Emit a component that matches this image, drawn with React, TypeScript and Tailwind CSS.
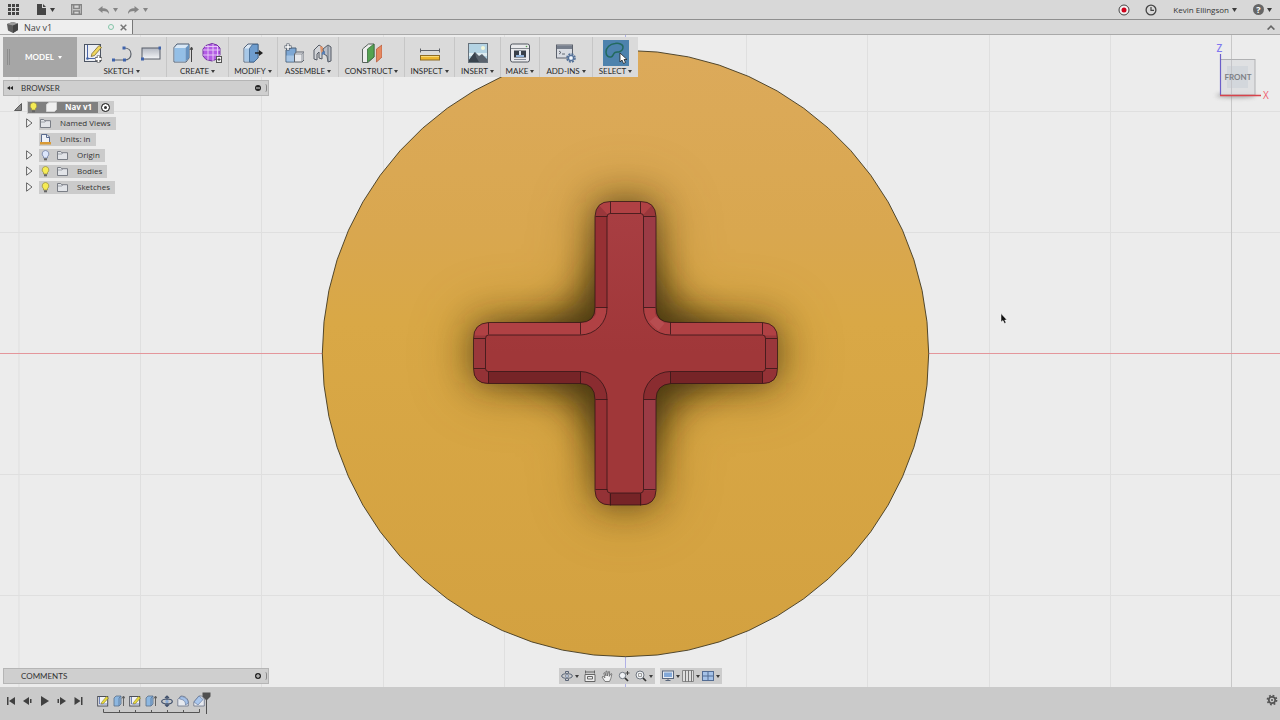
import React from 'react';

interface IconProps {
  children: React.ReactNode;
  size?: string;
  box?: string;
}

const Icon: React.FC<IconProps> = ({ children, size = 'w-5 h-5', box = '0 0 20 20' }) => (
  <svg viewBox={box} className={`${size} shrink-0`} fill="none" aria-hidden="true">
    {children}
  </svg>
);

const Caret: React.FC<{ className?: string }> = ({ className = 'text-[#3c3c3c]' }) => (
  <svg viewBox="0 0 5 4" className={`w-[5px] h-1 shrink-0 ${className}`} fill="currentColor" aria-hidden="true">
    <path d="M0 0h5L2.500 4z" />
  </svg>
);

const SmallCaret: React.FC<{ className?: string }> = ({ className = 'text-[#3c3c3c]' }) => (
  <svg viewBox="0 0 4 3" className={`w-1 h-[3px] shrink-0 ${className}`} fill="currentColor" aria-hidden="true">
    <path d="M0 0h4L2 3z" />
  </svg>
);

/* ---------- toolbar icons ---------- */

const SketchIcon = () => (
  <Icon>
    <rect x="1.5" y="1.5" width="16" height="17" fill="#eceef2" stroke="#4d5563" />
    <path d="M4.500 2v13.500h13" stroke="#4c66a8" />
    <circle cx="4.500" cy="15.500" r="1.300" fill="#4265a8" />
    <path d="M9 10.500l7-8 2.500 2-7 8-3.300 1z" fill="#f0d65c" stroke="#7a6a32" strokeWidth=".8" />
    <path d="M15.500 12.500v7M12 16h7" stroke="#555" strokeWidth="3.400" />
    <path d="M15.500 13v6M12.500 16h6" stroke="#fff" strokeWidth="1.800" />
  </Icon>
);

const LineIcon = () => (
  <Icon>
    <path d="M1 17h11.500c4 0 6.500-2.500 6.500-6s-2.500-6-7-6" stroke="#5d636d" strokeWidth="1.200" />
    <path d="M0 15.500h3v3H0zM11 15.500h3v3h-3zM10.500 3.500h3v3h-3z" fill="#3f63ab" />
  </Icon>
);

const RectIcon = () => (
  <Icon>
    <defs>
      <linearGradient id="rect" x2="0" y2="1">
        <stop stopColor="#b3b8c2" />
        <stop offset="1" stopColor="#f4f5f8" />
      </linearGradient>
    </defs>
    <rect x="1" y="5" width="18" height="11" fill="url(#rect)" stroke="#575d69" />
    <path d="M17.500 3.500h2.500v3h-2.500zM0 14.500h3v3H0z" fill="#3f63ab" />
  </Icon>
);

const ExtrudeIcon = () => (
  <Icon>
    <path d="M1 4.500L4 1h12v14l-3 4H1z" fill="#d9e8f6" stroke="#4d5d72" />
    <path d="M1.500 5h11v13.500h-11z" fill="#94bfe6" />
    <path d="M12.500 5L16 1.500V15l-3.500 3.500z" fill="#6792bf" />
    <path d="M18.500 19V5M17 7l1.500-3L20 7" stroke="#444" />
  </Icon>
);

const FormIcon = () => (
  <Icon>
    <path d="M4 2.500L10 .5l5 1.500 3 3v7l-3 4-5 2-6-1.500L1 13V6z" fill="#b35de4" stroke="#7234a0" />
    <path d="M1 7h17M1 12h17M6 2v15M11 1v17M15.500 3v13M3 3.500h13" stroke="#ead0f8" strokeWidth=".9" />
    <rect x="14.500" y="13.500" width="5" height="6" fill="#eee" stroke="#555" />
    <path d="M17 15v3M15.500 16.500h3" stroke="#444" />
  </Icon>
);

const PressPullIcon = () => (
  <Icon>
    <path d="M1 5l4-4h10v14l-4 4H1z" fill="#dbe8f5" stroke="#52637a" />
    <path d="M1.500 5.500H7v13H1.500z" fill="#a8c8e7" />
    <path d="M6.500 5.500l3-4H15V15l-4 4H6.500z" fill="#6f9dce" stroke="#3e638c" strokeWidth=".8" />
    <path d="M12 10h6" stroke="#222" strokeWidth="1.500" />
    <path d="M16 7l4 3-4 3z" fill="#222" />
  </Icon>
);

const ComponentIcon = () => (
  <Icon>
    <path d="M2 7l2-2h8v13l-2 1H2z" fill="#7da7d4" stroke="#4b6079" />
    <path d="M2.500 12.500h8v6h-8z" fill="#a7c5e4" />
    <path d="M10.500 11l2-2H20v8l-2 2h-7.500z" fill="#e8e9ec" stroke="#5b606a" />
    <path d="M10.500 11H18v8M18 11l2-2" stroke="#7c818a" strokeWidth=".8" />
    <path d="M4 .5v7M.5 4h7" stroke="#4c5663" strokeWidth="3" />
    <path d="M4 1v6M1 4h6" stroke="#fff" strokeWidth="1.500" />
  </Icon>
);

const JointIcon = () => (
  <Icon>
    <path d="M1 7l5-5 3 2v12l-3-1V9L4 11v6l-3-1z" fill="#d3d5d9" stroke="#555b65" />
    <path d="M7 3l3 1v4l-2 2z" fill="#e0956d" />
    <path d="M10 6l5-4 3 2v14l-3 1-1-6-3-2z" fill="#b9bec7" stroke="#555b65" />
    <path d="M15 2v16" stroke="#6c7682" />
    <path d="M9 9l3-1v3l-3 1z" fill="#587fb5" />
  </Icon>
);

const ConstructIcon = () => (
  <Icon>
    <path d="M.5 6l6-5H12v13l-6 5.500H.5z" fill="#eee" stroke="#59635c" />
    <path d="M5.500 6L12 1v13l-6.500 5z" fill="#55a350" stroke="#386e3c" strokeWidth=".8" />
    <path d="M14.500 6L20 2v12l-5.500 5z" fill="#e58860" stroke="#b85a3c" strokeWidth=".8" />
  </Icon>
);

const InspectIcon = () => (
  <Icon>
    <path d="M.5 5.500v4M19.500 5.500v4M1 7.500h18" stroke="#5c6068" />
    <rect x=".5" y="12.500" width="19" height="4.500" fill="#edb62e" stroke="#8d6b24" />
    <path d="M1 13.500h18" stroke="#f8d979" />
  </Icon>
);

const InsertIcon = () => (
  <Icon>
    <rect x=".5" y=".5" width="19" height="19" fill="#b4d3e3" stroke="#66717b" />
    <path d="M1 10h18v3H1z" fill="#e0edf2" />
    <circle cx="15" cy="5" r="2" fill="#f4f8d7" />
    <path d="M1 17l6-8 4 4 3-2 5 5v3H1z" fill="#59626d" />
    <path d="M1 17l6-8 1 5 3 5H1z" fill="#39434e" />
  </Icon>
);

const MakeIcon = () => (
  <Icon>
    <rect x=".5" y="1" width="19" height="18" rx="2" fill="#e9eaec" stroke="#50565f" />
    <path d="M1 5.500h18" stroke="#848990" />
    <rect x="4" y="7.500" width="12" height="7" fill="#384049" />
    <path d="M6 12h8v2H6z" fill="#92b3da" />
    <path d="M9 8h2v4H9z" fill="#dfe8f3" />
    <path d="M4 16.500h12" stroke="#8a8f97" />
    <circle cx="16.500" cy="3.500" r=".8" fill="#52a04d" />
  </Icon>
);

const AddInsIcon = () => (
  <Icon>
    <rect x=".5" y="2" width="16" height="13" fill="#d9dce2" stroke="#5b616c" />
    <path d="M1 2.500h15V6H1z" fill="#767e8c" />
    <path d="M3 8l2 1.500L3 11M6 11h3" stroke="#444b57" strokeWidth=".8" />
    <circle cx="15" cy="15" r="4" stroke="#557299" strokeWidth="1.600" strokeDasharray="2 1.140" />
    <circle cx="15" cy="15" r="2.600" fill="#d8e4f3" stroke="#557299" strokeWidth="1.200" />
    <circle cx="15" cy="15" r="1" fill="#fff" />
  </Icon>
);

const SelectIcon = () => (
  <span className="flex h-[26px] w-[26px] items-center justify-center bg-[#4d82ad]">
    <Icon size="w-[26px] h-[26px]" box="0 0 26 26">
      <path d="M16 12c3-1 4-2.500 4-5 0-3-4-4-8-3.500-5 .5-9 4-9 8.500 0 4 2.500 5.500 5 5s2-3.500 4-4.500 2.500-.2 4-.5z" stroke="#236a5e" strokeWidth="1.500" />
      <path d="M17 13v9l2-2 1.500 3.500 2-1L21 19.500h3z" fill="#fff" stroke="#222" strokeWidth=".8" />
    </Icon>
  </span>
);

interface ToolGroup {
  label: string;
  width: string;
  icons: React.FC[];
}

const toolGroups: ToolGroup[] = [
  { label: 'SKETCH', width: 'w-[89px]', icons: [SketchIcon, LineIcon, RectIcon] },
  { label: 'CREATE', width: 'w-[62px]', icons: [ExtrudeIcon, FormIcon] },
  { label: 'MODIFY', width: 'w-[49px]', icons: [PressPullIcon] },
  { label: 'ASSEMBLE', width: 'w-[61px]', icons: [ComponentIcon, JointIcon] },
  { label: 'CONSTRUCT', width: 'w-[66px]', icons: [ConstructIcon] },
  { label: 'INSPECT', width: 'w-[50px]', icons: [InspectIcon] },
  { label: 'INSERT', width: 'w-[46px]', icons: [InsertIcon] },
  { label: 'MAKE', width: 'w-[39px]', icons: [MakeIcon] },
  { label: 'ADD-INS', width: 'w-[53px]', icons: [AddInsIcon] },
  { label: 'SELECT', width: 'w-[46px]', icons: [SelectIcon] },
];

const Toolbar = () => (
  <div className="flex h-10 self-start bg-[#dadada] font-['Lato','Open_Sans',sans-serif]">
    <button className="flex w-[74px] items-center bg-[#a6a6a6] text-[8px] font-bold text-white">
      <span className="ml-1 h-4 w-[3px] border-x border-[#8c8c8c]" />
      <span className="flex flex-1 items-center justify-center gap-1">
        MODEL <SmallCaret className="text-white" />
      </span>
    </button>
    {toolGroups.map((group, i) => (
      <div
        key={group.label}
        className={`flex flex-col items-center ${group.width} ${i > 0 ? 'border-l border-[#c6c6c6]' : ''}`}
      >
        <div className="mt-[3px] flex h-[26px] items-center gap-[9px]">
          {group.icons.map((ToolIcon, n) => (
            <button key={n} aria-label={group.label}>
              <ToolIcon />
            </button>
          ))}
        </div>
        <button className="flex items-center gap-[2px] text-[8px] leading-[10px] whitespace-nowrap text-[#2a2a2a]">
          {group.label} <SmallCaret />
        </button>
      </div>
    ))}
  </div>
);

/* ---------- top bars ---------- */

const TopBar = () => (
  <header className="flex h-5 items-center border-b border-[#8f8f8f] bg-[#d8d8d8] pr-2 pl-2">
    <button aria-label="Data panel">
      <Icon size="w-[11px] h-[11px]" box="0 0 11 11">
        <path d="M0 0h3v3H0zM4 0h3v3H4zM8 0h3v3H8zM0 4h3v3H0zM4 4h3v3H4zM8 4h3v3H8zM0 8h3v3H0zM4 8h3v3H4zM8 8h3v3H8z" fill="#454545" />
      </Icon>
    </button>
    <button aria-label="File" className="ml-[18px] flex items-center gap-1">
      <Icon size="w-[9px] h-[11px]" box="0 0 9 11">
        <path d="M0 0h5v4h4v7H0z" fill="#454545" />
        <path d="M6 0l3 3H6z" fill="#454545" />
      </Icon>
      <Caret />
    </button>
    <button aria-label="Save" className="ml-4">
      <Icon size="w-[11px] h-[11px]" box="0 0 11 11">
        <path d="M.7.7h9.600v9.600H.7zM2.700.7v3.800h5.600V.7M2.700 10V7h5.600v3" stroke="#858585" strokeWidth="1.400" />
      </Icon>
    </button>
    <button aria-label="Undo" className="ml-4 flex items-center gap-1 text-[#858585]">
      <Icon size="w-[11px] h-2" box="0 0 11 8">
        <path d="M0 3.500L4.500 0v2.300C8.500 2.300 11 4 11 8 9.500 5.500 8 4.900 4.500 4.900V7z" fill="currentColor" />
      </Icon>
      <Caret className="text-[#858585]" />
    </button>
    <button aria-label="Redo" className="ml-[10px] flex items-center gap-1 text-[#858585]">
      <Icon size="w-[11px] h-2" box="0 0 11 8">
        <path d="M11 3.500L6.500 0v2.300C2.500 2.300 0 4 0 8c1.500-2.500 3-3.100 6.500-3.100V7z" fill="currentColor" />
      </Icon>
      <Caret className="text-[#858585]" />
    </button>

    <div className="ml-auto flex items-center">
      <button aria-label="Record">
        <Icon size="w-3 h-3" box="0 0 12 12">
          <circle cx="6" cy="6" r="5" fill="#f2f2f2" stroke="#444" />
          <circle cx="6" cy="6" r="2.500" fill="#d0021b" />
        </Icon>
      </button>
      <button aria-label="Job status" className="ml-[15px]">
        <Icon size="w-3 h-3" box="0 0 12 12">
          <circle cx="6" cy="6" r="4.900" stroke="#444" strokeWidth="1.300" />
          <path d="M6 3v3.300h3" stroke="#444" strokeWidth="1.200" />
        </Icon>
      </button>
      <button className="ml-4 flex items-center gap-[3px] text-[8px] text-[#333]">
        Kevin Ellingson <Caret />
      </button>
      <button aria-label="Help" className="ml-4 flex items-center gap-[3px]">
        <span className="flex h-[11px] w-[11px] items-center justify-center rounded-full bg-[#666] text-[9px] leading-none font-bold text-white">
          ?
        </span>
        <Caret />
      </button>
    </div>
  </header>
);

const TabBar = () => (
  <div className="flex h-[15px] justify-between border-b border-[#a9a9a9] bg-[#d8d8d8]">
    <div className="flex w-[133px] items-center border-r border-[#777] bg-[#eeeeee] pr-[5px] pl-[7px]">
      <Icon size="w-[11px] h-[11px]" box="0 0 11 11">
        <path d="M0 2L5.500 0 11 1.500V8L6 11 1 8.500z" fill="#5e5e5e" />
        <path d="M0 2L5.500 0 11 1.500 6 3.500z" fill="#9b9b9b" />
        <path d="M6 3.500l5-2V8l-5 3z" fill="#444" />
      </Icon>
      <span className="ml-[6px] text-[9px] leading-[13px] text-[#444]">Nav v1</span>
      <span className="ml-auto h-[6px] w-[6px] rounded-full border border-[#83c5a8]" />
      <button aria-label="Close tab" className="ml-[6px]">
        <Icon size="w-[7px] h-[7px]" box="0 0 7 7">
          <path d="M.7.7l5.600 5.600M6.300.7L.7 6.300" stroke="#777" strokeWidth="1.500" />
        </Icon>
      </button>
    </div>
    <button aria-label="Collapse" className="mr-[5px]">
      <Icon size="w-2 h-[5px]" box="0 0 8 5">
        <path d="M.6 4.600L4 1.200l3.400 3.400" stroke="#666" strokeWidth="1.600" />
      </Icon>
    </button>
  </div>
);

/* ---------- browser tree ---------- */

const Bulb: React.FC<{ on?: boolean }> = ({ on = true }) => (
  <Icon size="w-[9px] h-[11px]" box="0 0 9 11">
    <path d="M4.500.5a3.400 3.400 0 0 0-2 6.100V8h4V6.600a3.400 3.400 0 0 0-2-6.100z" fill={on ? '#f6ec55' : '#dce6fb'} stroke={on ? '#9b9344' : '#7180a3'} strokeWidth=".8" />
    <path d="M3 8.300h3v2H3z" fill="#656565" />
  </Icon>
);

const Folder = () => (
  <Icon size="w-[11px] h-[10px]" box="0 0 11 10">
    <path d="M.5 9.500v-8h3.200l1 1.200H10.500v6.800z" fill="#e2e4e8" stroke="#6f747d" strokeWidth=".9" />
    <path d="M1 4h4l.8-1" stroke="#8d929a" strokeWidth=".8" />
  </Icon>
);

const UnitsIcon = () => (
  <Icon size="w-[11px] h-[11px]" box="0 0 11 11">
    <path d="M1.500 8V.5H7L9.500 3v5" fill="#eef1f7" stroke="#5b6c8f" />
    <path d="M6.500.5V3.500h3" stroke="#5b6c8f" />
    <path d="M0 8h11v2.500H0z" fill="#d99a35" />
  </Icon>
);

const Expander = () => (
  <button aria-label="Expand" className="flex w-[13px] shrink-0">
    <Icon size="w-[7px] h-[10px]" box="0 0 7 10">
      <path d="M.6.800L6 5 .6 9.200z" fill="#f4f4f4" stroke="#555" strokeWidth=".9" />
    </Icon>
  </button>
);

interface TreeItem {
  label: string;
  icon: 'folder' | 'units';
  bulb?: 'on' | 'off';
}

const treeItems: TreeItem[] = [
  { label: 'Named Views', icon: 'folder' },
  { label: 'Units: in', icon: 'units' },
  { label: 'Origin', icon: 'folder', bulb: 'off' },
  { label: 'Bodies', icon: 'folder', bulb: 'on' },
  { label: 'Sketches', icon: 'folder', bulb: 'on' },
];

interface PanelBarProps {
  title: string;
  collapsible?: boolean;
}

const PanelBar: React.FC<PanelBarProps> = ({ title, collapsible = false }) => (
  <div className="flex h-4 w-[266px] items-center border border-[#b5b5b5] bg-[#cfcfcf] pr-px pl-[3px] font-['Lato','Open_Sans',sans-serif] text-[8px] text-[#333]">
    <span className="w-[14px]">
      {collapsible && (
        <button aria-label="Collapse browser" className="block">
          <Icon size="w-[6px] h-1" box="0 0 6 4">
            <path d="M3 0v4L0 2zM6 0v4L3 2z" fill="#222" />
          </Icon>
        </button>
      )}
    </span>
    <span>{title}</span>
    <button aria-label={collapsible ? 'Hide browser' : 'Add comment'} className="ml-auto">
      <Icon size="w-[6px] h-[6px]" box="0 0 6 6">
        <circle cx="3" cy="3" r="3" fill="#222" />
        <path d={collapsible ? 'M1 3h4' : 'M1 3h4M3 1v4'} stroke="#ddd" />
      </Icon>
    </button>
    <span className="ml-1 h-2 w-[2px] rounded-r border-r border-[#888]" />
  </div>
);

const Browser = () => (
  <nav className="mt-[3px]">
    <PanelBar title="BROWSER" collapsible />
    <div className="mt-[3px] flex h-4 items-center pl-[11px] text-[8px]">
      <button aria-label="Collapse document" className="w-[13px]">
        <Icon size="w-[8px] h-[8px]" box="0 0 8 8">
          <path d="M7.500.5v7H.5z" fill="#888" stroke="#444" strokeWidth=".8" />
        </Icon>
      </button>
      <div className="flex h-[13px] items-center bg-[#cbcbcb] pr-1 pl-px">
        <span className="flex h-[11px] w-[70px] items-center bg-[#808080] pl-px font-bold text-white">
          <Bulb />
          <Icon size="w-[11px] h-[10px] ml-2" box="0 0 11 10">
            <path d="M.5 2.500L3 .5h7.500v7l-2 2h-8z" fill="#f0f0f0" stroke="#d2d2d2" />
          </Icon>
          <span className="ml-2">Nav v1</span>
        </span>
        <label className="ml-[3px] flex">
          <input
            type="radio"
            defaultChecked
            aria-label="Activate component"
            className="h-[9px] w-[9px] appearance-none rounded-full border border-[#333] bg-[#333] shadow-[inset_0_0_0_2px_white]"
          />
        </label>
      </div>
    </div>
    <ul className="pl-[23px] text-[8px] text-[#333]">
      {treeItems.map((item) => (
        <li key={item.label} className="flex h-4 items-center">
          {item.icon === 'folder' ? <Expander /> : <span className="w-[13px]" />}
          <div className="flex h-[13px] items-center bg-[#cbcbcb] pr-[5px] pl-px">
            {item.bulb && (
              <span className="mr-[7px] ml-px flex">
                <Bulb on={item.bulb === 'on'} />
              </span>
            )}
            {item.icon === 'folder' ? <Folder /> : <UnitsIcon />}
            <span className="ml-[9px]">{item.label}</span>
          </div>
        </li>
      ))}
    </ul>
  </nav>
);

/* ---------- 3D canvas ---------- */

const CX = 625.5;
const CY = 353.5;

const discPoints = Array.from({ length: 60 }, (_, i) => {
  const a = (i * Math.PI) / 30;
  return `${(CX + 303.2 * Math.cos(a)).toFixed(1)},${(CY + 303.2 * Math.sin(a)).toFixed(1)}`;
}).join(' ');

const outerCross =
  'M-15-152H15Q30-152 30.500-137V-46Q30.500-31 45.500-31H137Q152-30 152-15V15Q152 30 137 30H45.500Q30.500 31 30.500 46V137Q30 151.500 15 151.500H-15Q-30 151.500-30.500 137V46Q-30.500 30-45.500 30H-137Q-152 30-152 15V-15Q-152-30-137-31H-45.500Q-30.500-31-30.500-46V-137Q-30-152-15-152Z';
const innerCross =
  'M-15-140H15Q18-140 18-137V-46A27 27 0 0 0 45-18.500H137Q140-18.500 140-15V15Q140 18 137 18H45A27 27 0 0 0 18 46V136Q18 139.500 15 139.500H-15Q-18.500 139.500-18.500 136V46A27 27 0 0 0-45 18H-137Q-140 18-140 15V-15Q-140-18.500-137-18.500H-45A27 27 0 0 0-18.500-46V-137Q-18.500-140-15-140Z';

const Viewport = () => (
  <svg
    viewBox="0 35 1280 652"
    preserveAspectRatio="xMidYMid slice"
    className="absolute inset-0 h-full w-full"
    aria-label="Model view"
  >
    <defs>
      <linearGradient id="gold" x2="0" y2="1">
        <stop stopColor="#dcaa5b" />
        <stop offset=".3" stopColor="#d9a74f" />
        <stop offset=".45" stopColor="#d9a846" />
        <stop offset="1" stopColor="#d3a140" />
      </linearGradient>
      <linearGradient id="face" x2="0" y2="1">
        <stop stopColor="#a83e42" />
        <stop offset=".5" stopColor="#a03739" />
        <stop offset="1" stopColor="#a03739" />
      </linearGradient>
      <filter id="soft" x="-50%" y="-50%" width="200%" height="200%">
        <feGaussianBlur stdDeviation="17" />
      </filter>
      <filter id="wide" x="-50%" y="-50%" width="200%" height="200%">
        <feGaussianBlur stdDeviation="30" />
      </filter>
      <clipPath id="bevel">
        <path d={outerCross} />
      </clipPath>
    </defs>

    {[19, 140.5, 261.5, 383.5, 504.5, 746.5, 867.5, 989.5, 1110.5].map((x) => (
      <path key={x} d={`M${x} 35V687`} stroke="#dfdfdf" />
    ))}
    {[111.5, 232.5, 474.5, 595.5].map((y) => (
      <path key={y} d={`M0 ${y}H1280`} stroke="#dfdfdf" />
    ))}
    <path d="M1231.500 35V687" stroke="#c8c8c8" />
    <path d="M0 353.500H1280" stroke="#e4969b" />
    <path d="M625.500 35V687" stroke="#b0b0e6" />

    <polygon points={discPoints} fill="url(#gold)" stroke="#41381f" strokeWidth=".9" />

    <g transform={`translate(${CX} ${CY})`}>
      {/* contact shadow, deepest in the four inner corners */}
      <path d={outerCross} fill="#6b4a10" opacity=".35" filter="url(#wide)" stroke="#6b4a10" strokeWidth="16" />
      <path d="M0-130L50-50 130 0 50 50 0 130-50 50-130 0-50-50z" fill="#33250a" opacity=".6" filter="url(#soft)" />
      <path d={outerCross} fill="#33250a" opacity=".62" filter="url(#soft)" />
      <g clipPath="url(#bevel)">
        <path d={outerCross} fill="#9a373b" />
        <path d="M-152-31H-45Q-26-34-30-46H-18V-18H-152zM152-31H45Q26-34 30-46H18V-18H152zM-30-152H30L18-139H-18z" fill="#b04144" />
        <path d="M-152 31H-45Q-26 34-30 46H-18V18H-152zM152 31H45Q26 34 30 46H18V18H152zM-30 152H30L18 139H-18z" fill="#762427" />
        <path d="M-31-137h13V-46h-13zM-31 46h13v91h-13z" fill="#973034" />
        <path d="M18-137h13V-46H18zM18 46h13v91H18z" fill="#9b3b45" />
        <path d="M-152-15h13v30h-13zM139-15h13v30h-13z" fill="#9a373b" />
        <path d="M-31 46c0-10-5-15-14-16V18c16 0 27 10 27 28zM31 46c0-10 5-15 14-16V18C29 18 18 28 18 46z" fill="#8a2c30" />
        <path d="M24-32l6-5 9 7-6 7z" fill="#c46063" opacity=".4" />
        <path d="M-31 137h15v15h-15zM16 137h15v15H16zM137 16h15v15h-15zM-152 16h15v15h-15z" fill="#943236" />
      </g>
      <path d={innerCross} fill="url(#face)" />
      <g stroke="#351517" strokeWidth=".8">
        <path d={outerCross} fill="none" />
        <path d={innerCross} fill="none" />
        <path d="M-15-152v12M15-152v12M-15 140v12M15 140v12M-30-137h12M18-137h12M-30 136h12M18 136h12M-30-46h12M18-46h12M-30 46h12M18 46h12M-152-15h12M140-15h12M-152 15h12M140 15h12M-137-31v12M137-31v12M-137 18v12M137 18v12M-45-31v12M45-31v12M-45 18v12M45 18v12" fill="none" />
      </g>
    </g>

    <path d="M1001 313.500v8.500l2-1.500 1.500 3 1.500-.7-1.300-2.800h2.300z" fill="#111" stroke="#fff" strokeWidth=".5" />
  </svg>
);

const ViewCube = () => (
  <svg viewBox="1208 40 64 64" className="absolute top-[5px] right-2 h-16 w-16" aria-label="View cube">
    <defs>
      <filter id="cubeShadow" x="-30%" y="-200%" width="160%" height="500%">
        <feGaussianBlur stdDeviation="2" />
      </filter>
    </defs>
    <ellipse cx="1236" cy="95.500" rx="20" ry="2" fill="#888" opacity=".8" filter="url(#cubeShadow)" />
    <rect x="1220.500" y="59.500" width="34.500" height="35.500" fill="#dedfe1" fillOpacity=".9" stroke="#b0b1b3" />
    <rect x="1227" y="66" width="21" height="22" fill="#d3d7dc" />
    <path d="M1231.500 60v35" stroke="#c4c4c8" />
    <path d="M1220.500 54v41" stroke="#6c5fc9" strokeWidth="1.200" />
    <path d="M1220 95.500h41" stroke="#d8434b" strokeWidth="1.500" />
    <text x="1238" y="80" textAnchor="middle" className="fill-[#7d8085] font-['Lato','Open_Sans',sans-serif] text-[8px] font-bold">
      FRONT
    </text>
    <text x="1219.500" y="52" textAnchor="middle" className="fill-[#8078f0] text-[10px] font-semibold">Z</text>
    <text x="1266" y="99" textAnchor="middle" className="fill-[#f0606c] text-[10px]">X</text>
  </svg>
);

/* ---------- bottom navigation ---------- */

const NavButton: React.FC<{ label: string; caret?: boolean; children: React.ReactNode }> = ({ label, caret, children }) => (
  <button aria-label={label} className="flex items-center gap-[2px]">
    <Icon size="w-3 h-3" box="0 0 12 12">{children}</Icon>
    {caret && <SmallCaret />}
  </button>
);

const NavBar = () => (
  <div className="flex h-4 gap-[5px]">
    <div className="flex items-center gap-[5px] bg-[#cccccc] px-[2px]">
      <NavButton label="Orbit" caret>
        <ellipse cx="6" cy="6" rx="5.300" ry="2.300" stroke="#5a6577" />
        <path d="M4.500 3V1.500h3V3M4.500 9v1.500h3V9" stroke="#5a6577" />
        <circle cx="6" cy="6" r="1.500" fill="#c9d8ee" stroke="#5a6577" strokeWidth=".6" />
      </NavButton>
      <NavButton label="Look at">
        <path d="M1 4.500h10v7H1z" fill="#eee" stroke="#666" />
        <path d="M3.500 6.500h5v2.500h-5zM1.500 2h9M1.500.5v3M10.500.5v3" stroke="#666" />
      </NavButton>
      <NavButton label="Pan">
        <path d="M4 11.500L1 7l1-.7 2 1.500L2.800 3l1-.4L5 6V1.200h1L6.500 6 7.600 1.500l1 .2L8.300 6.400 10 3.500l.9.500L9.800 8.500 8.500 11.500z" fill="#f3f3f3" stroke="#666" strokeWidth=".8" />
      </NavButton>
      <NavButton label="Zoom">
        <circle cx="4.500" cy="5.500" r="3.200" fill="#f0f2f5" stroke="#707780" />
        <path d="M7 8l3 3" stroke="#333" strokeWidth="1.700" />
        <path d="M9.500 1v4M7.500 3h4" stroke="#444" />
      </NavButton>
      <NavButton label="Fit" caret>
        <circle cx="5" cy="5" r="4" fill="#f0f2f5" stroke="#707780" />
        <path d="M3.500 3.500h3v3h-3z" stroke="#888" strokeWidth=".8" />
        <path d="M8 8l3 3" stroke="#333" strokeWidth="1.700" />
      </NavButton>
    </div>
    <div className="flex items-center gap-[2px] bg-[#cccccc] px-[2px]">
      <NavButton label="Display settings" caret>
        <rect x=".5" y="1" width="11" height="7.500" fill="#e9edf3" stroke="#59677d" />
        <path d="M2 2.500h8v4.500H2z" fill="#82a8d8" />
        <path d="M3.500 10.500h5M6 8.500v2" stroke="#59677d" />
      </NavButton>
      <NavButton label="Grid and snaps" caret>
        <path d="M.5.500h11v11H.5z" fill="#dedede" stroke="#888" />
        <path d="M3.500 0v12M6.500 0v12M9.500 0v12" stroke="#777" />
      </NavButton>
      <NavButton label="Viewports" caret>
        <rect x=".5" y="1.500" width="11" height="9" fill="#a5c2e8" stroke="#536c93" />
        <path d="M6 1.500v9M.5 6h11" stroke="#536c93" />
      </NavButton>
    </div>
  </div>
);

/* ---------- timeline ---------- */

const playback = [
  { label: 'Go to start', d: 'M1 1h1.500v8H1zM9 1v8L3 5z' },
  { label: 'Step back', d: 'M6 1v8L0 5zM7 3h1.500v4H7z' },
  { label: 'Play', d: 'M1 0l8 5-8 5z' },
  { label: 'Step forward', d: 'M3 1v8l6-4zM.5 3H2v4H.5z' },
  { label: 'Go to end', d: 'M7 1h1.500v8H7zM.5 1v8l6-4z' },
];

const TimelineSketch = () => (
  <>
    <rect x=".7" y="1.500" width="10" height="9.500" fill="#f3f3f5" stroke="#4b4f57" />
    <path d="M2.500 2v7h8" stroke="#4c66a8" strokeWidth=".8" />
    <path d="M4.500 7.500l5-6 2 1.500-5 5.500-2 .5z" fill="#eadc3c" stroke="#85782e" strokeWidth=".6" />
  </>
);

const TimelineExtrude = () => (
  <>
    <path d="M1 3l2-2h5v8l-2 2H1z" fill="#8db7e0" stroke="#5c6f88" strokeWidth=".8" />
    <path d="M6 3v8M6 3l2-2" stroke="#55749a" strokeWidth=".8" />
    <path d="M10.500 11V2M9 3.500L10.500 1 12 3.500" stroke="#555" strokeWidth=".9" />
  </>
);

const timeline: { label: string; art: React.ReactNode }[] = [
  { label: 'Sketch 1', art: <TimelineSketch /> },
  { label: 'Extrude 1', art: <TimelineExtrude /> },
  { label: 'Sketch 2', art: <TimelineSketch /> },
  { label: 'Extrude 2', art: <TimelineExtrude /> },
  {
    label: 'Move',
    art: (
      <>
        <ellipse cx="6" cy="6.500" rx="5.300" ry="2.500" stroke="#40506c" strokeWidth="1.200" />
        <path d="M6 1.500v9M4 3l2-2 2 2M4 9.500l2 2 2-2" stroke="#40506c" strokeWidth="1.200" />
        <circle cx="6" cy="6.500" r="1.700" fill="#90b0da" />
      </>
    ),
  },
  {
    label: 'Fillet',
    art: (
      <>
        <path d="M.8 11V4.500l3-3.500c5 0 7.500 3 7.500 7v3z" fill="#e6e9ef" stroke="#687286" strokeWidth=".8" />
        <path d="M3.500 1.500c5 0 7.500 3 7.800 6.500L8.500 10c0-4-2-5.500-6-6z" fill="#a4c1e8" stroke="#5a6f93" strokeWidth=".6" />
      </>
    ),
  },
  {
    label: 'Chamfer',
    art: (
      <>
        <path d="M.8 7l5-6h3l2.500 3v7H.8z" fill="#e6e9ef" stroke="#687286" strokeWidth=".8" />
        <path d="M1 7l5-6 4 3.500L5 10z" fill="#a9c6ec" stroke="#5a6f93" strokeWidth=".6" />
      </>
    ),
  },
];

const Timeline = () => (
  <footer className="flex h-[33px] items-start bg-[#cacaca] pr-[2px]">
    <div className="mt-[9px] flex gap-[7px] pl-[6px]">
      {playback.map((step) => (
        <button key={step.label} aria-label={step.label}>
          <Icon size="w-[10px] h-[10px]" box="0 0 10 10">
            <path d={step.d} fill="#404040" />
          </Icon>
        </button>
      ))}
    </div>
    <div className="mt-2 ml-[13px] flex flex-col gap-px">
      <div className="flex gap-1">
        {timeline.map((feature) => (
          <button key={feature.label} aria-label={feature.label}>
            <Icon size="w-3 h-3" box="0 0 12 12">{feature.art}</Icon>
          </button>
        ))}
      </div>
      <Icon size="w-[108px] h-[5px]" box="0 0 108 5">
        <path d="M6.500 1v3.500h96V1M22.500 2v2.500M38.500 2v2.500M54.500 2v2.500M70.500 2v2.500M86.500 2v2.500" stroke="#555" />
      </Icon>
    </div>
    <div className="-ml-[3px] mt-[5px]">
      <Icon size="w-[9px] h-[22px]" box="0 0 9 22">
        <path d="M.5.500h8v4L5 8v14H4V8L.5 4.500z" fill="#505050" />
      </Icon>
    </div>
    <button aria-label="Timeline settings" className="mt-[7px] ml-auto">
      <Icon size="w-3 h-3" box="0 0 12 12">
        <circle cx="6" cy="6" r="4.600" stroke="#555" strokeWidth="1.600" strokeDasharray="1.800 1.810" />
        <circle cx="6" cy="6" r="3.200" stroke="#555" strokeWidth="1.700" />
        <circle cx="6" cy="6" r="1" fill="#555" />
      </Icon>
    </button>
  </footer>
);

const App: React.FC = () => {
  return (
    <div className="flex h-screen flex-col overflow-hidden bg-[#ececec] font-['Open_Sans','Noto_Sans',sans-serif]">
      <TopBar />
      <TabBar />
      <main className="relative flex-1">
        <Viewport />
        <ViewCube />
        <div className="relative flex h-full flex-col px-[3px] pt-[2px] pb-[3px]">
          <Toolbar />
          <Browser />
          <div className="mt-auto grid grid-cols-[1fr_auto_1fr] items-center">
            <PanelBar title="COMMENTS" />
            <NavBar />
          </div>
        </div>
      </main>
      <Timeline />
    </div>
  );
};

export default App;
